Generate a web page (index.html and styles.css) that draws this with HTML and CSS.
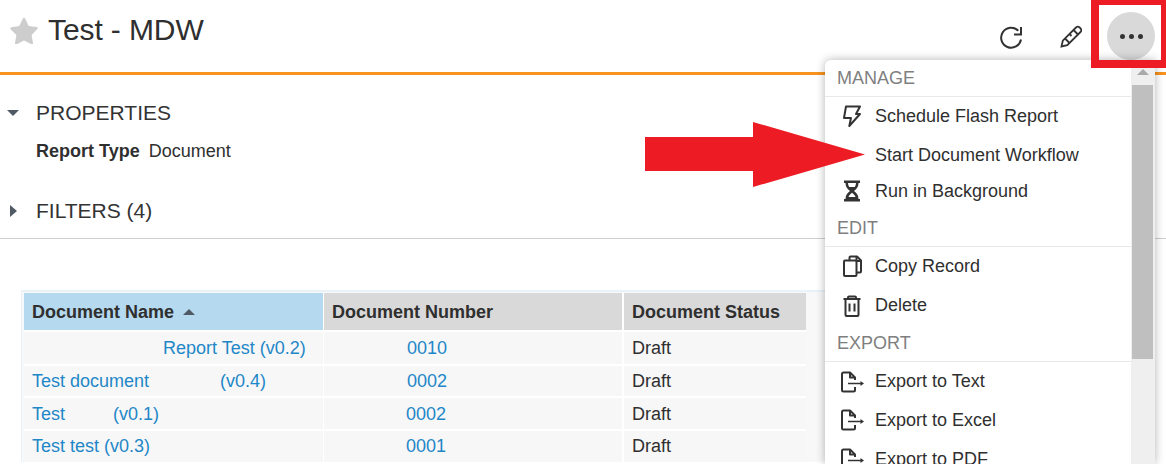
FILE: index.html
```html
<!DOCTYPE html>
<html lang="en">
<head>
<meta charset="utf-8">
<title>Test - MDW</title>
<link rel="stylesheet" href="styles.css">
</head>
<body>
<div class="page">
  <header class="top">
    <svg class="star" viewBox="0 0 28 27"><path d="M14 .8c.5 0 .9.3 1.100.7l3.600 7.500 8 1.100c1 .1 1.400 1.300.7 2l-5.800 5.800 1.400 8.100c.2 1-.8 1.700-1.700 1.200L14 23.400l-7.300 3.900c-.9.500-1.900-.2-1.700-1.200l1.400-8.100L.6 12.200c-.7-.7-.3-1.900.7-2l8-1.100 3.600-7.500c.2-.5.600-.8 1.100-.8z"/></svg>
    <h1 class="title">Test - MDW</h1>
    <div class="actions">
      <svg class="act refresh" viewBox="0 0 24 26"><path d="M22 15.500A10 10 0 1 1 19.300 6.700"/><path d="M22 3v7.500h-7"/></svg>
      <svg class="act pencil" viewBox="0 0 24 24"><path d="M3.500 22.500l1.300-5.800L18 3.500c1-1 2.600-1 3.600 0l.9.9c1 1 1 2.600 0 3.600L9.300 21.200z"/><path d="M15.500 6l4.500 4.500M7 14.500l4.500 4.500M11.500 10l2 2"/></svg>
      <div class="more"><span></span><span></span><span></span></div>
    </div>
  </header>

  <section class="section">
    <div class="sec-head"><i class="caret-down"></i><span>PROPERTIES</span></div>
    <div class="prop"><b>Report Type</b><span>Document</span></div>
  </section>
  <section class="section filters">
    <div class="sec-head"><i class="caret-right"></i><span>FILTERS (4)</span></div>
  </section>

  <div class="table-wrap">
    <table class="grid">
      <thead>
        <tr>
          <th class="col-a sorted">Document Name <i class="caret-up"></i></th>
          <th class="col-b">Document Number</th>
          <th class="col-c">Document Status</th>
        </tr>
      </thead>
      <tbody>
        <tr class="r1">
          <td><a class="gap-131">Report Test</a> <a>(v0.2)</a></td>
          <td class="col-b"><a class="num-a">0010</a></td>
          <td>Draft</td>
        </tr>
        <tr class="r2">
          <td><a>Test document</a><a class="gap-71">(v0.4)</a></td>
          <td class="col-b"><a class="num-a">0002</a></td>
          <td>Draft</td>
        </tr>
        <tr class="r3">
          <td><a>Test</a><a class="gap-48">(v0.1)</a></td>
          <td class="col-b"><a class="num-b">0002</a></td>
          <td>Draft</td>
        </tr>
        <tr class="r4">
          <td><a>Test test (v0.3)</a></td>
          <td class="col-b"><a class="num-b">0001</a></td>
          <td>Draft</td>
        </tr>
      </tbody>
    </table>
  </div>
</div>

<aside class="menu">
  <div class="menu-list">
    <div class="menu-head">MANAGE</div>
    <div class="item"><svg class="ico" viewBox="0 0 24 24"><path d="M5 2.500h14l-4 7.500h4L8.300 22l1.700-8H3z"/></svg><span>Schedule Flash Report</span></div>
    <div class="item"><span class="ico-blank"></span><span>Start Document Workflow</span></div>
    <div class="item short"><svg class="ico" viewBox="0 0 24 24"><path class="solid" fill-rule="evenodd" d="M3 1.500h16V4h-1.500c0 4-2 6-4.500 8 2.500 2 4.500 4 4.500 8H19v2.500H3V20h1.500c0-4 2-6 4.500-8-2.500-2-4.500-4-4.500-8H3zM7 4c.1 1.500.5 3 1.300 4h5.400c.8-1 1.200-2.500 1.300-4zM11 13.800c-1.500 1.200-3 2.500-3.500 4.200h7c-.5-1.700-2-3-3.500-4.200z"/></svg><span>Run in Background</span></div>
    <div class="menu-head">EDIT</div>
    <div class="item tall"><svg class="ico" viewBox="0 0 24 24"><path d="M8.500 6V3.500c0-.6.400-1 1-1h6.500l4 4v11c0 .6-.4 1-1 1h-3.500"/><path d="M15.500 2.500V7H20"/><path d="M4 6.500h10.500c.6 0 1 .4 1 1V21c0 .6-.4 1-1 1H4c-.6 0-1-.4-1-1V7.500c0-.6.400-1 1-1z"/></svg><span>Copy Record</span></div>
    <div class="item tall"><svg class="ico" viewBox="0 0 24 24"><path d="M2.500 5h17M7 5V3.500c0-.6.400-1 1-1h6c.6 0 1 .4 1 1V5"/><path d="M4.500 5v16c0 .6.400 1 1 1h11c.6 0 1-.4 1-1V5"/><path d="M8.500 9.500v8M13.500 9.500v8"/></svg><span>Delete</span></div>
    <div class="menu-head">EXPORT</div>
    <div class="item"><svg class="ico export" viewBox="0 0 24 24"><path d="M15 10V7.500L10 2.500H3.500c-1 0-1.500.5-1.500 1.500v16c0 1 .5 1.500 1.500 1.500h10c1 0 1.500-.5 1.500-1.500v-3"/><path d="M10 2.500v5h5"/><path class="thin" d="M8 13.500h13"/><path class="solid" d="M20.500 11l3.500 2.500-3.500 2.500z"/></svg><span>Export to Text</span></div>
    <div class="item"><svg class="ico export" viewBox="0 0 24 24"><path d="M15 10V7.500L10 2.500H3.500c-1 0-1.500.5-1.500 1.500v16c0 1 .5 1.500 1.500 1.500h10c1 0 1.500-.5 1.500-1.500v-3"/><path d="M10 2.500v5h5"/><path class="thin" d="M8 13.500h13"/><path class="solid" d="M20.500 11l3.500 2.500-3.500 2.500z"/></svg><span>Export to Excel</span></div>
    <div class="item"><svg class="ico export" viewBox="0 0 24 24"><path d="M15 10V7.500L10 2.500H3.500c-1 0-1.500.5-1.500 1.500v16c0 1 .5 1.500 1.500 1.500h10c1 0 1.500-.5 1.500-1.500v-3"/><path d="M10 2.500v5h5"/><path class="thin" d="M8 13.500h13"/><path class="solid" d="M20.500 11l3.500 2.500-3.500 2.500z"/></svg><span>Export to PDF</span></div>
  </div>
  <div class="scroll">
    <i class="scroll-up"></i>
    <div class="thumb"></div>
  </div>
</aside>

<div class="red-box"></div>
<svg class="red-arrow" viewBox="0 0 220 65"><path d="M0 15h108V0l112 32.500L108 65V49H0z"/></svg>
</body>
</html>
```
FILE: styles.css
```css
* { box-sizing: border-box; }
html, body { margin: 0; height: 100%; }
body {
  background: #fff;
  color: #2f2f2f;
  font-family: "Liberation Sans", Arial, sans-serif;
  overflow: hidden;
  position: relative;
}
.page { width: 100%; }
.top {
  height: 75px;
  display: flex;
  align-items: flex-start;
  border-bottom: 3px solid #f7931e;
}
.star { width: 28px; height: 27px; margin: 17px 0 0 10px; fill: #cdcdcd; flex: none; }
.title { margin: 11px 0 0 10px; font-size: 30px; line-height: 38px; font-weight: 400; color: #2f2f2f; letter-spacing: -.1px; }
.actions { margin-left: auto; display: flex; align-items: flex-start; padding-right: 11px; }
.act { fill: none; stroke: #333; stroke-width: 2; flex: none; }
.refresh { width: 24px; height: 26px; margin-top: 24px; }
.pencil { width: 24px; height: 24px; margin: 24px 0 0 35px; stroke-width: 1.800; }
.more {
  width: 48px; height: 48px; border-radius: 50%;
  background: #d9d9d9;
  margin: 12px 0 0 25px;
  display: flex; align-items: center; justify-content: center; gap: 4px;
}
.more span { width: 5px; height: 5px; border-radius: 50%; background: #333; }

.section { padding-top: 23px; }
.sec-head { display: flex; align-items: center; height: 30px; font-size: 21px; color: #333; }
.sec-head i { flex: none; width: 36px; display: block; position: relative; height: 10px; }
.caret-down::before {
  content: ""; position: absolute; left: 7px; top: 2px;
  border-left: 6px solid transparent; border-right: 6px solid transparent; border-top: 6px solid #4f5a65;
}
.caret-right::before {
  content: ""; position: absolute; left: 10px; top: -1px;
  border-top: 6px solid transparent; border-bottom: 6px solid transparent; border-left: 7px solid #4f5a65;
}
.prop { margin: 12px 0 0 36px; font-size: 18px; line-height: 22px; display: flex; gap: 9px; }
.prop b { font-weight: 700; }
.filters { padding-top: 34px; height: 77px; border-bottom: 1px solid #cfcfcf; }

.table-wrap {
  margin: 51px 0 0 21px;
  width: 804px;
  border-top: 2px solid #e9f2f9;
  border-left: 1px solid #e9f2f9;
  background: #f8f8f8;
  padding: 1px 0 0 2px;
}
.grid { border-collapse: separate; border-spacing: 0; table-layout: fixed; width: 782px; font-size: 18px; }
.grid th {
  height: 37px; text-align: left; padding: 1px 0 0 8px;
  font-size: 18px; font-weight: 700; color: #2f2f2f;
  background: #d9d9d9; border-left: 2px solid #fff;
}
.grid th.sorted { background: #b5d9ee; border-left: 0; }
.col-a { width: 299px; }
.col-b { width: 299px; }
.col-c { width: 184px; }
.grid td {
  padding: 0 0 0 8px; background: #f7f7f7; color: #2f2f2f;
  border-left: 2px solid #fff; border-top: 2px solid #fff;
  white-space: nowrap;
}
.grid td:first-child { border-left: 0; }
.grid .col-b { border-left-width: 1px; }
.r1 td { height: 34px; padding-top: 1px; }
.r2 td { height: 32px; }
.r3 td { height: 33px; padding-top: 1px; }
.r4 td { height: 33px; }
.grid a { color: #1f87c8; }
.gap-131 { margin-left: 131px; }
.gap-71 { margin-left: 71px; }
.gap-48 { margin-left: 48px; }
.num-a { margin-left: 75px; }
.num-b { margin-left: 74px; }
.caret-up {
  display: inline-block; margin-left: 4px; vertical-align: 3px;
  border-left: 6px solid transparent; border-right: 6px solid transparent; border-bottom: 6px solid #4f5a65;
}

.menu {
  position: absolute; left: 825px; top: 60px; width: 330px; height: 404px;
  background: #fff; display: flex; overflow: hidden;
  border-radius: 6px 0 0 0;
  box-shadow: 0 0 10px rgba(0,0,0,.3);
}
.menu-list { flex: 1; min-width: 0; }
.menu-head {
  height: 37px; padding: 7px 0 0 12px; border-bottom: 1px solid #e8e8e8;
  font-size: 18px; line-height: 22px; color: #7f7f7f;
}
.item { display: flex; align-items: center; height: 38.800px; padding-left: 16px; font-size: 18px; color: #2f2f2f; }
.item.short { height: 33px; margin-bottom: 2px; }
.item.tall { height: 39.300px; }
.ico, .ico-blank { width: 24px; height: 24px; margin-right: 10px; flex: none; }
.ico { fill: none; stroke: #333; stroke-width: 2; stroke-linejoin: round; }
.ico.export { margin: 0 11px 0 -1px; }
.ico .solid { fill: #333; stroke: none; }
.ico .thin { stroke-width: 1.500; }
.scroll { width: 24px; flex: none; background: #efefef; padding: 25px 2px 0 1px; position: relative; }
.scroll-up {
  position: absolute; left: 6px; top: 9px;
  border-left: 6px solid transparent; border-right: 6px solid transparent; border-bottom: 6px solid #a9a9a9;
}
.thumb { height: 274px; background: #bfbfbf; }

.red-box {
  position: absolute; left: 1091px; top: 0; width: 75px; height: 68px;
  border: solid #ed1c24; border-width: 5px 5px 8px 8px;
}
.red-arrow { position: absolute; left: 645px; top: 122px; width: 220px; height: 65px; fill: #ed1c24; }
```
